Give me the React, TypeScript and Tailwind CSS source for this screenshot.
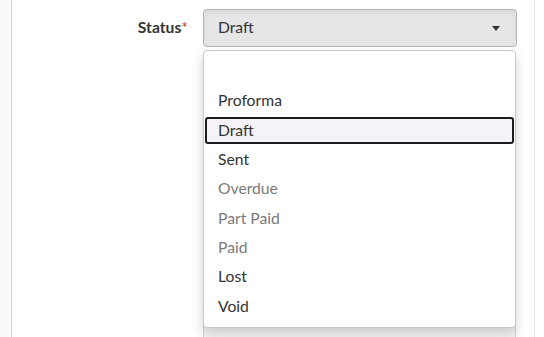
const statuses = [
  { label: "", muted: false },
  { label: "Proforma", muted: false },
  { label: "Draft", muted: false },
  { label: "Sent", muted: false },
  { label: "Overdue", muted: true },
  { label: "Part Paid", muted: true },
  { label: "Paid", muted: true },
  { label: "Lost", muted: false },
  { label: "Void", muted: false },
];

const selected = "Draft";

export default function App() {
  return (
    <div
      className="flex w-[544px] h-[337px] bg-white overflow-hidden text-[15.7px] text-[#333]"
      style={{ fontFamily: "Lato, 'Open Sans', sans-serif" }}
    >
      <div className="w-[12px] shrink-0 bg-[#faf9fb] border-r border-[#d3d3d3]" />

      <div className="relative flex-1 border-r border-[#e9e8ea]">
        <div className="flex pt-[9px]">
          <div className="w-[176px] shrink-0 flex items-center justify-end h-[38px] font-bold">
            Status<span className="text-[#b04a2f] font-normal">*</span>
          </div>
          <div className="ml-[15px] w-[314px] h-[38px] flex items-center justify-between pl-[14px] pr-[16px] rounded-[4px] border border-[#b3b2b5] bg-[#e6e5e8] shadow-[inset_0_3px_5px_rgba(0,0,0,0.06)]">
            <span>{selected}</span>
            <span className="w-0 h-0 border-x-[4px] border-x-transparent border-t-[5px] border-t-[#333]" />
          </div>
        </div>

        {/* field that sits underneath the open list */}
        <div className="ml-[191px] mt-[270px] w-[313px] h-[60px] rounded-[4px] border border-[#d0d0d0] bg-[#f6f6f6]" />

        <div className="absolute left-[191px] top-[50px] w-[313px] pt-[6px] pb-[6px] rounded-[4px] border border-[#c8c7ca] bg-white shadow-[0_6px_12px_rgba(0,0,0,0.175)]">
          {statuses.map((s) => {
            const isSel = s.label === selected;
            return (
              <div key={s.label || "empty"} className="h-[29.33px] px-[1px] flex items-center">
                <div
                  className={`flex-1 h-[27px] flex items-center rounded-[3px] ${
                    isSel ? "border-2 border-[#1c1c1c] bg-[#f5f3f7] pl-[11px]" : "pl-[13px]"
                  } ${s.muted ? "text-[#7a7a7a]" : "text-[#333]"}`}
                >
                  {s.label}
                </div>
              </div>
            );
          })}
        </div>
      </div>

      <div className="w-[9px] shrink-0 bg-white" />
    </div>
  );
}
